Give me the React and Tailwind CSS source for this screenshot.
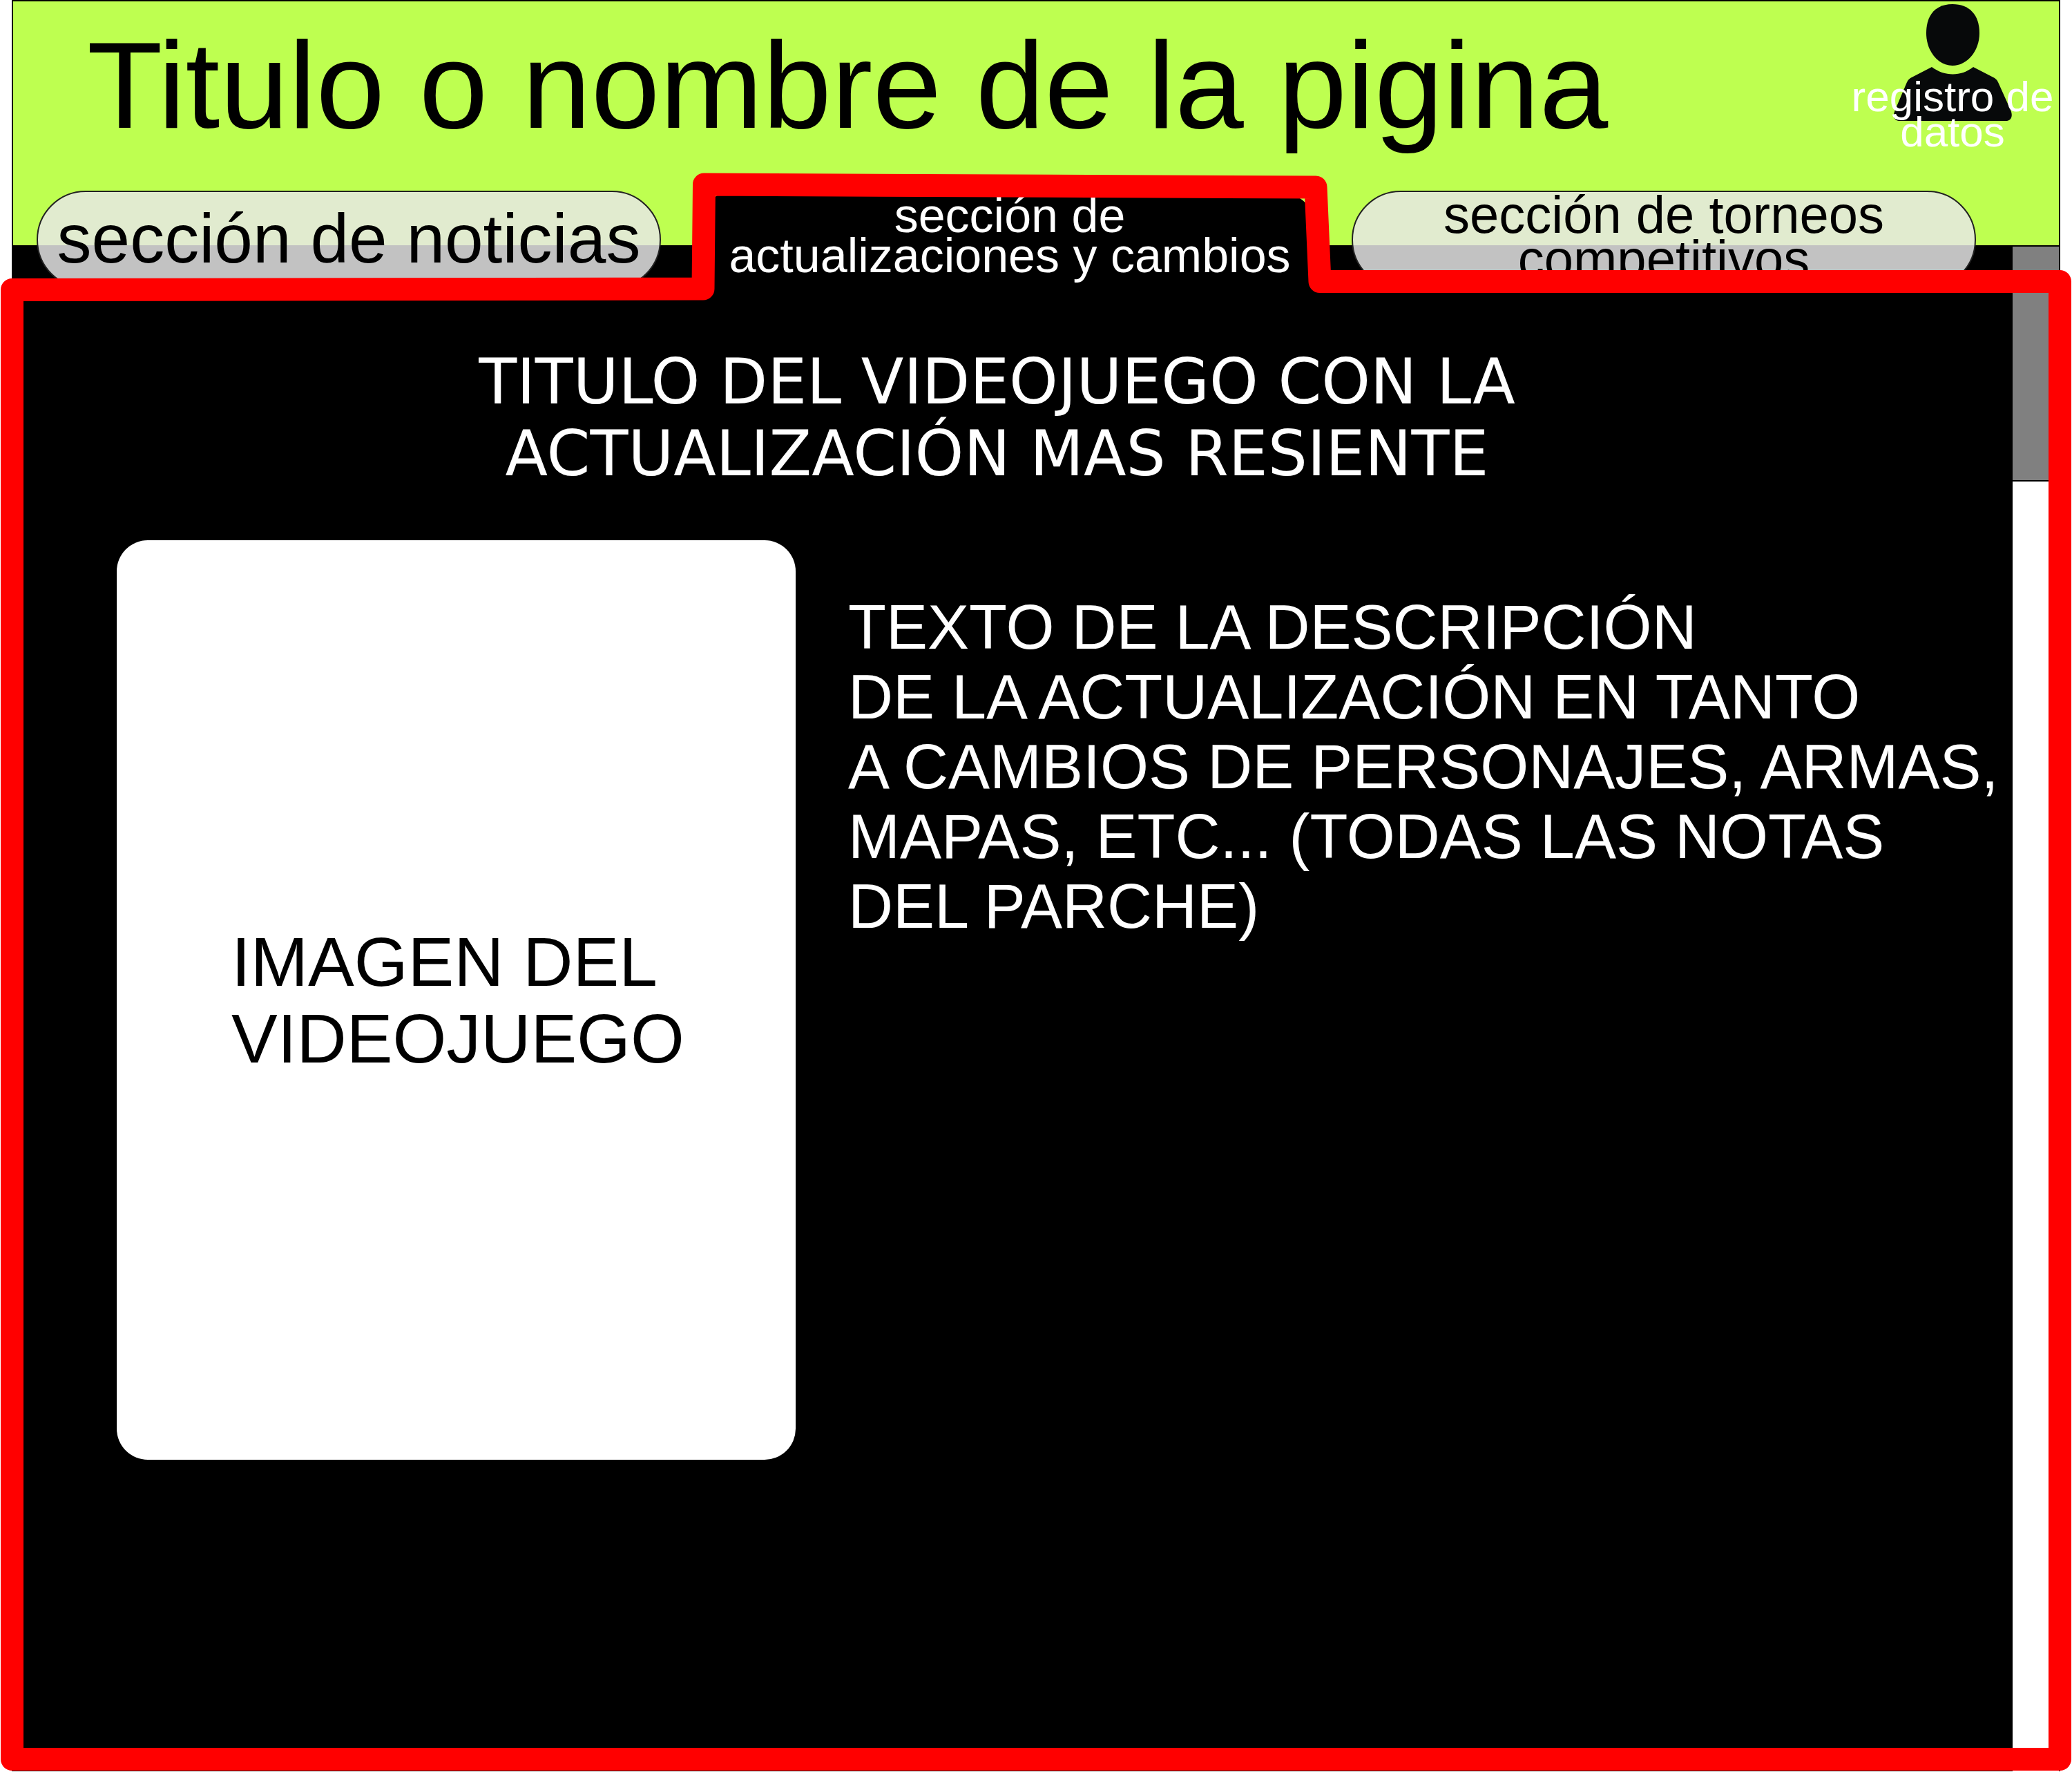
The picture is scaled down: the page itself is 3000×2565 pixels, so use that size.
const tab = "h-[142px] w-[904px] shrink-0 whitespace-nowrap text-center";
const idleTab = "rounded-full border-2 border-[#222] bg-[#e7e7e7]/84";

function User() {
  return (
    <svg viewBox="0 0 171 170" className="h-[170px] w-[171px]" fill="#07090a" aria-hidden="true">
      <path d="M85 0C109 0 124 15 124 42C124 68 106 89 85 89C64 89 47 68 47 42C47 15 61 0 85 0Z" />
      <path d="M55 91C74 105 97 105 115 91L146 107Q149 109 151 113L169 153C173 162 170 169 162 169H9C0 169-2 162 2 153L19 113Q21 109 24 107Z" />
    </svg>
  );
}

export default function App() {
  return (
    <div className="relative flex min-h-screen flex-col bg-white px-[17px] pb-px font-['Liberation_Sans',Arial,sans-serif] text-black">
      <header className="flex h-[355px] items-start justify-between border-2 border-b-0 border-black bg-[#beff50] pl-[107px]">
        <h1 className="whitespace-nowrap pt-[17px] text-[179px] leading-[208px]">Titulo o nombre de la pigina</h1>
        <a href="#registro" className="relative flex w-[308px] shrink-0 flex-col items-center pt-1 text-center">
          <User />
          <span className="absolute inset-x-0 top-[112px] text-[62px] leading-[51px] text-white">
            registro de
            <br />
            datos
          </span>
        </a>
      </header>
      <main className="flex flex-1 bg-black">
        <div className="flex min-w-0 flex-1 flex-col">
          <nav className="-mt-[79px] flex gap-[48px] pl-[36px]">
            <button className={`${tab} ${idleTab} pb-1 text-[100px] leading-[130px]`}>sección de noticias</button>
            <button className={`${tab} rounded-[62px] bg-black pb-3 pl-[10px] text-[70px] leading-[58px] text-white`}>
              sección de
              <br />
              actualizaciones y cambios
            </button>
            <button className={`${tab} ${idleTab} pb-2 text-[76px] leading-[64px]`}>
              sección de torneos
              <br />
              competitivos
            </button>
          </nav>
          <h2 className="pt-[83px] pr-[44px] text-center font-['DejaVu_Sans',sans-serif] text-[90px] leading-[104px] text-white">
            TITULO DEL VIDEOJUEGO CON LA
            <br />
            ACTUALIZACIÓN MAS RESIENTE
          </h2>
          <section className="flex gap-[76px] pt-[73px] pl-[152px]">
            <figure className="flex h-[1331px] w-[983px] shrink-0 items-center rounded-[45px] bg-white pl-[166px]">
              <figcaption className="text-[100px] leading-[111px]">
                IMAGEN DEL
                <br />
                VIDEOJUEGO
              </figcaption>
            </figure>
            <p className="pt-[76px] text-[90px] leading-[101px] whitespace-nowrap text-white">
              TEXTO DE LA DESCRIPCIÓN
              <br />
              DE LA ACTUALIZACIÓN EN TANTO
              <br />
              A CAMBIOS DE PERSONAJES, ARMAS,
              <br />
              MAPAS, ETC... (TODAS LAS NOTAS
              <br />
              DEL PARCHE)
            </p>
          </section>
        </div>
        <div className="w-[69px] shrink-0 border-t-2 border-r-2 border-black bg-white">
          <div className="h-[340px] border-b-2 border-black bg-[#808080]" />
        </div>
      </main>
      <svg viewBox="0 0 3000 2565" preserveAspectRatio="none" className="pointer-events-none absolute inset-0 h-full w-full" fill="none" aria-hidden="true">
        <path d="M17.5 419.5L1018 418L1019.5 267L1905 271L1911 407.5H2982.5V2546.5H17.5Z" stroke="#f00" strokeWidth="33" strokeLinejoin="round" />
      </svg>
    </div>
  );
}
